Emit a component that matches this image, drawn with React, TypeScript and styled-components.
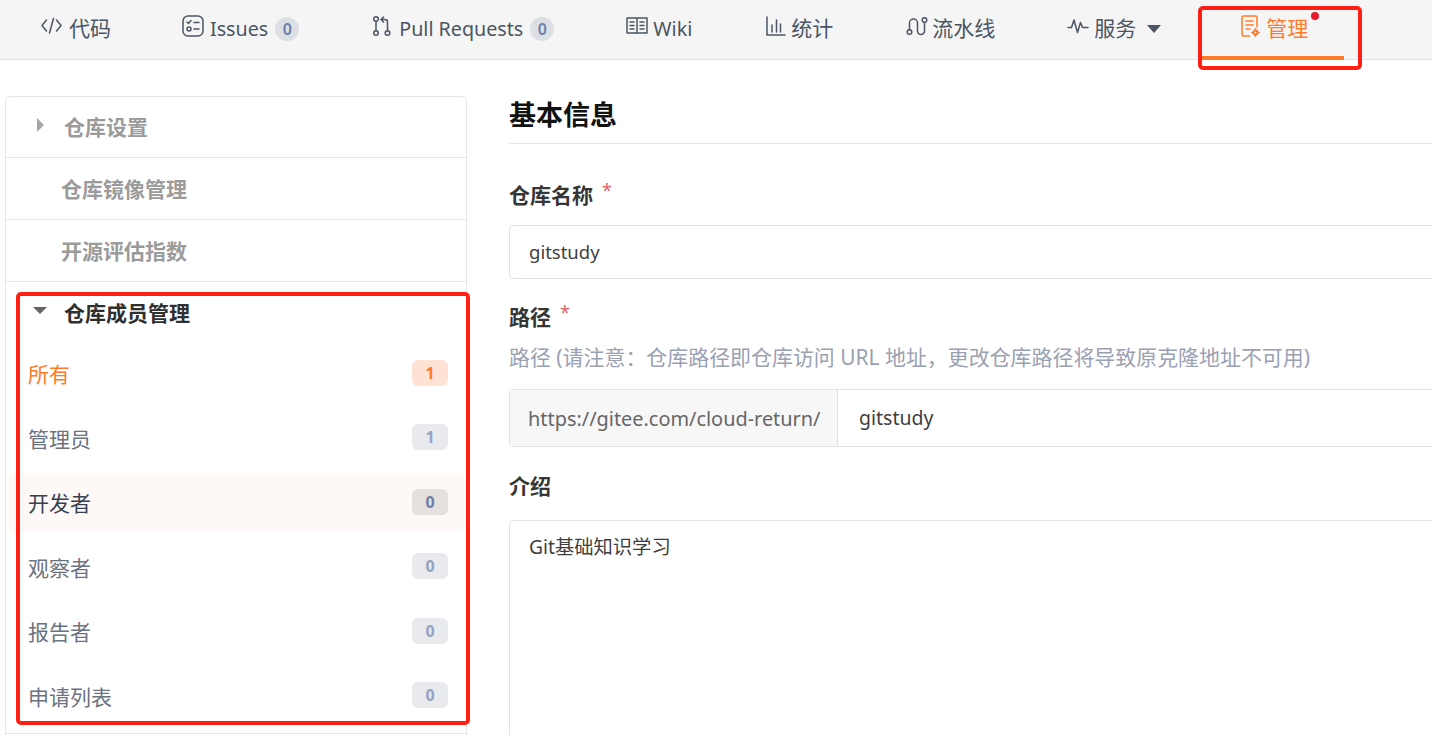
import React from 'react';
import styled, { createGlobalStyle } from 'styled-components';

const FONT = '"Noto Sans", "Noto Sans CJK SC", sans-serif';

const GlobalStyle = createGlobalStyle`
    html, body {
        margin: 0;
        padding: 0;
        height: 100%;
        overflow: hidden;
        background: #fff;
        font-family: ${FONT};
    }
    * {
        box-sizing: border-box;
    }
`;

const Page = styled.div`
    position: relative;
    width: 1432px;
    height: 735px;
    overflow: hidden;
`;

const TabBar = styled.div`
    display: flex;
    height: 60px;
    padding-left: 4px;
    background: #f5f5f5;
    border-bottom: 1px solid #e0e0e0;
`;

const Tab = styled.div<{ $active?: boolean; $left?: number; $right?: number; $gap?: number; $latin?: boolean }>`
    position: relative;
    display: flex;
    align-items: flex-start;
    gap: ${props => props.$gap ?? 6}px;
    height: ${props => (props.$active ? '60px' : '59px')};
    padding: 14px ${props => props.$right ?? 36}px 0 ${props => props.$left ?? 36}px;
    font-size: ${props => (props.$latin ? '19.7px' : '21px')};
    line-height: ${props => (props.$latin ? '30px' : '28px')};
    white-space: nowrap;
    color: ${props => (props.$active ? '#fe7b29' : '#4b5563')};
    border-bottom: ${props => (props.$active ? '4px solid #fe7b29' : '0')};
`;

const TabIcon = styled.svg`
    flex: none;
    width: 22px;
    height: 22px;
    margin-top: 1px;
    fill: none;
    stroke: currentColor;
    stroke-width: 1.5;
    stroke-linecap: round;
    stroke-linejoin: round;
`;

const TabCount = styled.span`
    display: inline-block;
    width: 24px;
    height: 24px;
    margin: 3px 0 0 1px;
    border-radius: 12px;
    background: #dcdfe4;
    color: #6b7fa8;
    font-size: 16px;
    font-weight: 600;
    line-height: 24px;
    text-align: center;
`;

const Caret = styled.span`
    width: 0;
    height: 0;
    margin: 11px 0 0 6px;
    border-left: 7px solid transparent;
    border-right: 7px solid transparent;
    border-top: 8px solid #4b5563;
`;

const Dot = styled.span`
    position: absolute;
    top: 12px;
    left: 110px;
    width: 8px;
    height: 8px;
    border-radius: 50%;
    background: #e6192e;
`;

const Body = styled.div`
    display: flex;
    align-items: flex-start;
    width: 1700px;
    padding: 36px 0 0 5px;
`;

const Sidebar = styled.div`
    flex: none;
    width: 462px;
    height: 720px;
    border: 1px solid #e5e7eb;
    border-radius: 6px;
`;

const SideHead = styled.div<{ $first?: boolean }>`
    display: flex;
    align-items: center;
    height: ${props => (props.$first ? '61px' : '62px')};
    padding: 0 0 2px ${props => (props.$first ? '28px' : '55px')};
    font-size: 21px;
    font-weight: 700;
    color: #9b9b9b;
    border-bottom: 1px solid #e3e5e8;
`;

const MemberSection = styled.div`
    height: 452px;
    border-bottom: 1px solid #e3e5e8;
`;

const SideTitle = styled.div`
    display: flex;
    align-items: center;
    height: 62px;
    padding: 0 0 2px 27px;
    font-size: 21px;
    font-weight: 700;
    color: #2f2f2f;
`;

const ArrowRight = styled.span`
    width: 0;
    height: 0;
    margin: -2px 20px 0 3px;
    border-top: 7px solid transparent;
    border-bottom: 7px solid transparent;
    border-left: 7px solid #a6a6a6;
`;

const ArrowDown = styled.span`
    width: 0;
    height: 0;
    margin: -4px 17px 0 0;
    border-left: 7px solid transparent;
    border-right: 7px solid transparent;
    border-top: 7px solid #666;
`;

const MemberList = styled.div`
    margin-top: -3px;
`;

const MemberRow = styled.div<{ $active?: boolean; $hover?: boolean }>`
    display: flex;
    align-items: center;
    justify-content: space-between;
    height: ${props => (props.$hover ? '58px' : '64.5px')};
    margin: ${props => (props.$hover ? '3.3px 1px' : '0 1px')};
    padding: 0 17px 0 21px;
    border-radius: 6px;
    font-size: 21px;
    color: ${props => (props.$active ? '#fe7b29' : props.$hover ? '#374151' : '#6b7280')};
    background: ${props => (props.$hover ? '#fef8f6' : 'transparent')};
`;

const MemberCount = styled.span<{ $active?: boolean; $hover?: boolean }>`
    width: 36px;
    height: 26px;
    margin-top: -1px;
    border-radius: 6px;
    font-size: 16px;
    font-weight: 700;
    line-height: 26px;
    text-align: center;
    color: ${props => (props.$active ? '#fe7b29' : props.$hover ? '#6b7fa8' : '#94a3c0')};
    background: ${props => (props.$active ? '#fee3d4' : props.$hover ? '#e3e0de' : '#e8eaed')};
`;

const Main = styled.div`
    flex: 1;
    margin-left: 42px;
`;

const Title = styled.h2`
    margin: 0;
    height: 48px;
    font-size: 27px;
    line-height: 37px;
    font-weight: 700;
    color: #111;
    border-bottom: 1px solid #e3e5e8;
`;

const Label = styled.div<{ $top: number }>`
    margin-top: ${props => props.$top}px;
    padding-bottom: 2px;
    font-size: 21px;
    line-height: 28px;
    font-weight: 700;
    color: #363636;
`;

const Star = styled.span`
    position: relative;
    top: -6px;
    margin-left: 9px;
    font-size: 18px;
    font-weight: 400;
    color: #e0626a;
`;

const Field = styled.div`
    display: flex;
    align-items: center;
    height: 54px;
    margin-top: 13px;
    padding: 0 0 2px 19px;
    border: 1px solid #e1e3e9;
    border-radius: 4px;
    font-size: 18.5px;
    color: #3f3f3f;
`;

const Hint = styled.div`
    margin-top: 8px;
    padding-bottom: 1px;
    font-size: 20.95px;
    line-height: 30px;
    white-space: nowrap;
    color: #9aa1b3;
`;

const Group = styled.div`
    display: flex;
    height: 58px;
    margin-top: 16px;
    border: 1px solid #e1e3e9;
    border-radius: 4px;
    font-size: 19.9px;
`;

const Addon = styled.div`
    flex: none;
    width: 328px;
    padding-left: 18px;
    background: #f7f7f8;
    border-right: 1px solid #e1e3e9;
    white-space: nowrap;
    color: #666;
    line-height: 58px;
`;

const GroupValue = styled.div`
    padding-left: 21px;
    font-size: 19.5px;
    color: #3f3f3f;
    line-height: 56px;
`;

const TextArea = styled.div`
    height: 300px;
    margin-top: 18px;
    padding: 11px 19px;
    border: 1px solid #e1e3e9;
    border-radius: 4px;
    font-size: 19.3px;
    line-height: 30px;
    color: #3f3f3f;
`;

const RedFrame = styled.div<{ $x: number; $y: number; $w: number; $h: number }>`
    position: absolute;
    left: ${props => props.$x}px;
    top: ${props => props.$y}px;
    width: ${props => props.$w}px;
    height: ${props => props.$h}px;
    border: 4px solid #fe2015;
    border-radius: 5px;
    pointer-events: none;
`;

const members = [
    { label: '所有', count: 1, active: true },
    { label: '管理员', count: 1 },
    { label: '开发者', count: 0, hover: true },
    { label: '观察者', count: 0 },
    { label: '报告者', count: 0 },
    { label: '申请列表', count: 0 },
];

const App = () => (
    <Page>
        <GlobalStyle />
        <TabBar>
            <Tab $gap={7} $right={35}>
                <TabIcon viewBox="0 0 22 22">
                    <path d="M6.500 5 2 10.500 6.500 16M16.500 5 21 10.500 16.500 16M13.500 3.500 9.500 18" />
                </TabIcon>
                代码
            </Tab>
            <Tab $latin>
                <TabIcon viewBox="0 0 22 22">
                    <rect x="1" y="1" width="20" height="20" rx="5" />
                    <path d="M5 7l1.500 1.500L9 5.500M12 7.500h5M12 14h5" />
                    <circle cx="7" cy="14" r="2" />
                </TabIcon>
                Issues
                <TabCount>0</TabCount>
            </Tab>
            <Tab $latin>
                <TabIcon viewBox="0 0 22 22">
                    <circle cx="5" cy="4" r="2.300" />
                    <circle cx="5" cy="18" r="2.300" />
                    <circle cx="16.500" cy="18" r="2.300" />
                    <path d="M5 6.500v9M16.500 15.500V7A2.500 2.500 0 0 0 14 4.500H10M12.500 2 10 4.500 12.500 7" />
                </TabIcon>
                Pull Requests
                <TabCount>0</TabCount>
            </Tab>
            <Tab $latin $gap={5} $right={37}>
                <TabIcon viewBox="0 0 22 22">
                    <path d="M1 3h20v15H1zM11 3v15M4 7h4M4 10.500h4M4 14h4M14 7h4M14 10.500h4M14 14h4" />
                </TabIcon>
                Wiki
            </Tab>
            <Tab $gap={4} $right={38}>
                <TabIcon viewBox="0 0 22 22">
                    <path d="M2 2v18h18M7 10v7M11.500 5v12M15.500 9v8" />
                </TabIcon>
                统计
            </Tab>
            <Tab $left={35} $gap={4} $right={38}>
                <TabIcon viewBox="0 0 22 22">
                    <circle cx="3.500" cy="17" r="2.300" />
                    <circle cx="18.500" cy="5" r="2.300" />
                    <path d="M3.500 14.500V8a4 4 0 0 1 8 0v8a3.500 3.500 0 0 0 7 0V7.500" />
                </TabIcon>
                流水线
            </Tab>
            <Tab $left={34} $gap={5} $right={40}>
                <TabIcon viewBox="0 0 22 22">
                    <path d="M1 12.500h3.500L7 5l3.500 12.500 3-10 2 5h5.500" />
                </TabIcon>
                服务
                <Caret />
            </Tab>
            <Tab $active $left={39} $gap={4}>
                <TabIcon viewBox="0 0 22 22">
                    <path d="M9.500 21H3.500A1.500 1.500 0 0 1 2 19.500V2.500A1.500 1.500 0 0 1 3.500 1h12A1.500 1.500 0 0 1 17 2.500V12M6 6h7M6 10h7M6 14h4" />
                    <circle cx="15.500" cy="17.500" r="2" strokeWidth="2" />
                    <path d="M15.500 13.800v1M15.500 20.200v1M11.800 17.500h1M18.200 17.500h1" />
                </TabIcon>
                管理
                <Dot />
            </Tab>
        </TabBar>
        <Body>
            <Sidebar>
                <SideHead $first>
                    <ArrowRight />
                    仓库设置
                </SideHead>
                <SideHead>仓库镜像管理</SideHead>
                <SideHead>开源评估指数</SideHead>
                <MemberSection>
                    <SideTitle>
                        <ArrowDown />
                        仓库成员管理
                    </SideTitle>
                    <MemberList>
                        {members.map(member => (
                            <MemberRow key={member.label} $active={member.active} $hover={member.hover}>
                                {member.label}
                                <MemberCount $active={member.active} $hover={member.hover}>
                                    {member.count}
                                </MemberCount>
                            </MemberRow>
                        ))}
                    </MemberList>
                </MemberSection>
            </Sidebar>
            <Main>
                <Title>基本信息</Title>
                <Label $top={37}>
                    仓库名称<Star>*</Star>
                </Label>
                <Field>gitstudy</Field>
                <Label $top={24}>
                    路径<Star>*</Star>
                </Label>
                <Hint>路径 (请注意：仓库路径即仓库访问 URL 地址，更改仓库路径将导致原克隆地址不可用)</Hint>
                <Group>
                    <Addon>https://gitee.com/cloud-return/</Addon>
                    <GroupValue>gitstudy</GroupValue>
                </Group>
                <Label $top={25}>介绍</Label>
                <TextArea>Git基础知识学习</TextArea>
            </Main>
        </Body>
        <RedFrame $x={1198} $y={6} $w={164} $h={64} />
        <RedFrame $x={16} $y={292} $w={454} $h={433} />
    </Page>
);

export default App;
